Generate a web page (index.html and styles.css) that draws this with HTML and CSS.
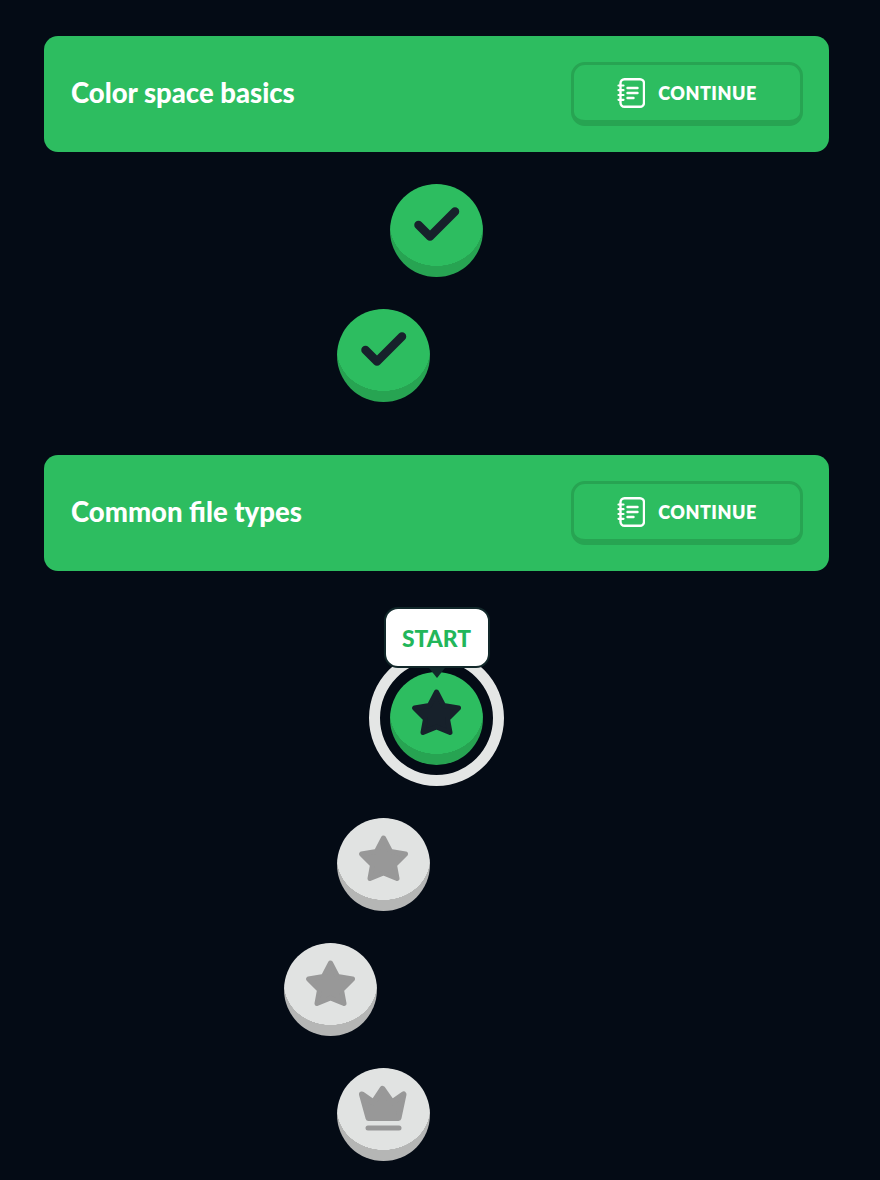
FILE: index.html
```html
<!DOCTYPE html>
<html lang="en">
<head>
<meta charset="utf-8">
<title>Course path</title>
<link rel="stylesheet" href="styles.css">
</head>
<body>
<main class="path">
  <section class="banner">
    <h2 class="banner-title">Color space basics</h2>
    <button class="banner-btn" type="button">
      <svg class="book" viewBox="0 0 28 30" width="28" height="30" aria-hidden="true"><use href="#book"></use></svg>
      <span>CONTINUE</span>
    </button>
  </section>
  <div class="nodes nodes-first">
    <div class="node done"><svg class="icon" viewBox="0 0 93 93"><use href="#check"></use></svg></div>
    <div class="node done left-1"><svg class="icon" viewBox="0 0 93 93"><use href="#check"></use></svg></div>
  </div>
  <section class="banner">
    <h2 class="banner-title">Common file types</h2>
    <button class="banner-btn" type="button">
      <svg class="book" viewBox="0 0 28 30" width="28" height="30" aria-hidden="true"><use href="#book"></use></svg>
      <span>CONTINUE</span>
    </button>
  </section>
  <div class="nodes nodes-second">
    <div class="node done current">
      <span class="ring"></span>
      <svg class="icon" viewBox="0 0 93 93"><use href="#star"></use></svg>
      <span class="tip">START</span>
    </div>
    <div class="node locked left-1"><svg class="icon" viewBox="0 0 93 93"><use href="#star"></use></svg></div>
    <div class="node locked left-2"><svg class="icon" viewBox="0 0 93 93"><use href="#star"></use></svg></div>
    <div class="node locked left-1"><svg class="icon" viewBox="0 0 93 93"><use href="#crown"></use></svg></div>
  </div>
</main>
<svg class="defs" width="0" height="0" aria-hidden="true">
  <defs>
    <g id="check"><path d="M28.5 41 40 52.5 65 27.5" fill="none" stroke="currentColor" stroke-width="8.5" stroke-linecap="round" stroke-linejoin="round"></path></g>
    <g id="star"><path d="M46.5 20 53.5 33.5 68.5 36 57.5 47 60 60.5 46.5 55 33 60.5 35.5 47 24.5 36 39.5 33.5Z" fill="currentColor" stroke="currentColor" stroke-width="5" stroke-linejoin="round"></path></g>
    <g id="crown">
      <path d="M25 26.5 36.5 34.5 45.5 21 55 34.5 66.5 26.5 61.5 50H31.5Z" fill="currentColor" stroke="currentColor" stroke-width="6" stroke-linejoin="round"></path>
      <rect x="28.5" y="57.5" width="36" height="5" rx="2.5" fill="currentColor"></rect>
    </g>
    <g id="book" fill="none" stroke="#fff" stroke-linecap="round">
      <rect x="3.5" y="1.2" width="23.5" height="27.6" rx="4" stroke-width="2.4"></rect>
      <path d="M1.5 7.5H6.5M1.5 12.2H6.5M1.5 17H6.5M1.5 21.8H6.5" stroke-width="2.2"></path>
      <path d="M10.5 10H20.5M10.5 15H20.5M10.5 20H16.5" stroke-width="2.4"></path>
    </g>
  </defs>
</svg>
</body>
</html>
```
FILE: styles.css
```css
* { box-sizing: border-box; }
html, body { margin: 0; height: 100%; }
body {
  background: #040b15;
  font-family: "Lato", "Open Sans", sans-serif;
  overflow: hidden;
}
.path {
  display: flex;
  flex-direction: column;
  padding: 36px 51px 0 44px;
}
.banner {
  height: 116px;
  flex: none;
  background: #2dbd60;
  border-radius: 14px;
  display: flex;
  align-items: center;
  justify-content: space-between;
  padding: 0 26px 0 27px;
}
.banner-title {
  margin: 0 0 2px;
  color: #fff;
  font-size: 27.5px;
  font-weight: 900;
  line-height: 1;
}
.banner-btn {
  width: 232px;
  height: 64px;
  display: flex;
  align-items: center;
  justify-content: center;
  gap: 13px;
  background: transparent;
  border: 3px solid #27a452;
  border-bottom-width: 6px;
  border-radius: 14px;
  padding: 0;
  color: #fff;
  font: 800 18px "Lato", sans-serif;
  letter-spacing: 0.5px;
}
.nodes {
  display: flex;
  flex-direction: column;
  align-items: center;
  gap: 32px;
}
.nodes-first { padding: 32px 0 53px; }
.nodes-second { padding-top: 101px; }
.node {
  position: relative;
  width: 93px;
  height: 93px;
  flex: none;
  border-radius: 50%;
}
.done {
  background: radial-gradient(ellipse 46.5px 41px at 50% 41px, #2dbd60 99.4%, #27a452 100%);
  color: #17212b;
}
.locked {
  background: radial-gradient(ellipse 46.5px 41px at 50% 41px, #e1e3e2 99.4%, #b5b6b5 100%);
  color: #989898;
}
.current { margin-bottom: 21px; }
.left-1 { margin-right: 106px; }
.left-2 { margin-right: 212px; }
.icon { display: block; width: 93px; height: 93px; }
.ring {
  position: absolute;
  inset: -22px -21px -21px;
  border: 11px solid #e4e6e5;
  border-radius: 50%;
}
.tip {
  position: absolute;
  left: 50%;
  top: -65px;
  transform: translateX(-50%);
  width: 106px;
  height: 61px;
  display: flex;
  align-items: center;
  justify-content: center;
  background: #fff;
  border: 2px solid #12282a;
  border-radius: 14px;
  color: #22b65a;
  font-size: 22.8px;
  font-weight: 900;
}
.tip::after {
  content: "";
  position: absolute;
  left: 50%;
  bottom: -12px;
  margin-left: -8px;
  border: 8px solid transparent;
  border-bottom-width: 0;
  border-top: 10px solid #12282a;
}
.defs { position: absolute; }
```
